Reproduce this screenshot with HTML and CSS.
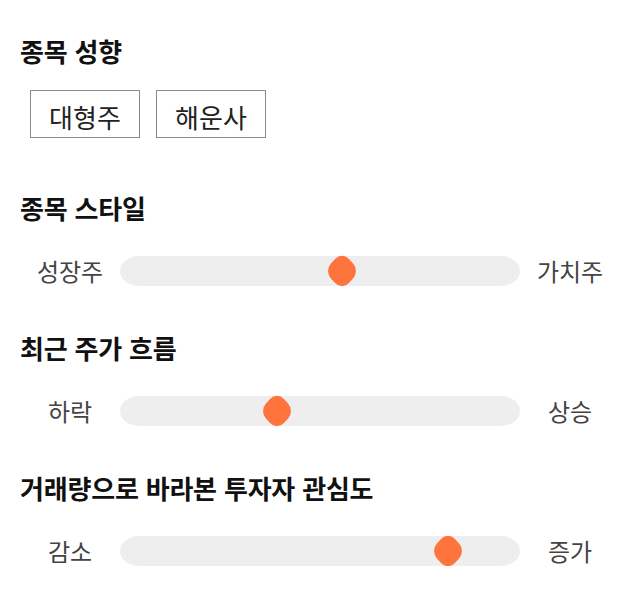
FILE: index.html
```html
<!DOCTYPE html>
<html lang="ko">
<head>
<meta charset="utf-8">
<link rel="stylesheet" href="styles.css">
</head>
<body>
<div class="page">
  <section class="sec sec-first">
    <h2 class="title">종목 성향</h2>
    <div class="tags">
      <span class="tag">대형주</span>
      <span class="tag">해운사</span>
    </div>
  </section>
  <section class="sec sec-tags-after">
    <h2 class="title">종목 스타일</h2>
    <div class="row">
      <span class="lbl">성장주</span>
      <div class="track"><span class="thumb" style="left:55.4%"></span></div>
      <span class="lbl">가치주</span>
    </div>
  </section>
  <section class="sec">
    <h2 class="title">최근 주가 흐름</h2>
    <div class="row">
      <span class="lbl">하락</span>
      <div class="track"><span class="thumb" style="left:39.3%"></span></div>
      <span class="lbl">상승</span>
    </div>
  </section>
  <section class="sec">
    <h2 class="title">거래량으로 바라본 투자자 관심도</h2>
    <div class="row">
      <span class="lbl">감소</span>
      <div class="track"><span class="thumb" style="left:82%"></span></div>
      <span class="lbl">증가</span>
    </div>
  </section>
</div>
</body>
</html>
```
FILE: styles.css
```css
* { box-sizing: border-box; }
html, body {
  margin: 0;
  padding: 0;
  background: #fff;
}
body {
  font-family: "Noto Sans CJK KR", "Noto Sans", sans-serif;
  color: #111;
}
.page {
  width: 640px;
  padding: 33px 20px 0 20px;
}
.sec {
  margin-top: 44px;
}
.sec-first { margin-top: 0; }
.sec-tags-after { margin-top: 52px; }
.title {
  margin: 0;
  font-size: 26px;
  font-weight: 700;
  line-height: 36px;
  color: #111;
  letter-spacing: -0.2px;
}
.tags {
  display: flex;
  gap: 16px;
  margin: 21px 0 0 10px;
}
.tag {
  display: block;
  border: 1px solid #8a8a8a;
  padding: 8px 0 2px;
  font-size: 26px;
  line-height: 36px;
  color: #222;
  width: 110px;
  text-align: center;
}
.row {
  display: flex;
  align-items: center;
  margin-top: 30px;
}
.lbl {
  width: 100px;
  text-align: center;
  font-size: 24px;
  line-height: 30px;
  color: #444;
}
.track {
  position: relative;
  flex: 1;
  height: 30px;
  background: #eeeeee;
  border-radius: 19px / 15px;
}
.thumb {
  position: absolute;
  top: 50%;
  width: 26px;
  height: 26px;
  background: #ff743d;
  border-radius: 10px;
  transform: translate(-50%, -50%) scale(0.98, 1.07) rotate(45deg);
}
```
